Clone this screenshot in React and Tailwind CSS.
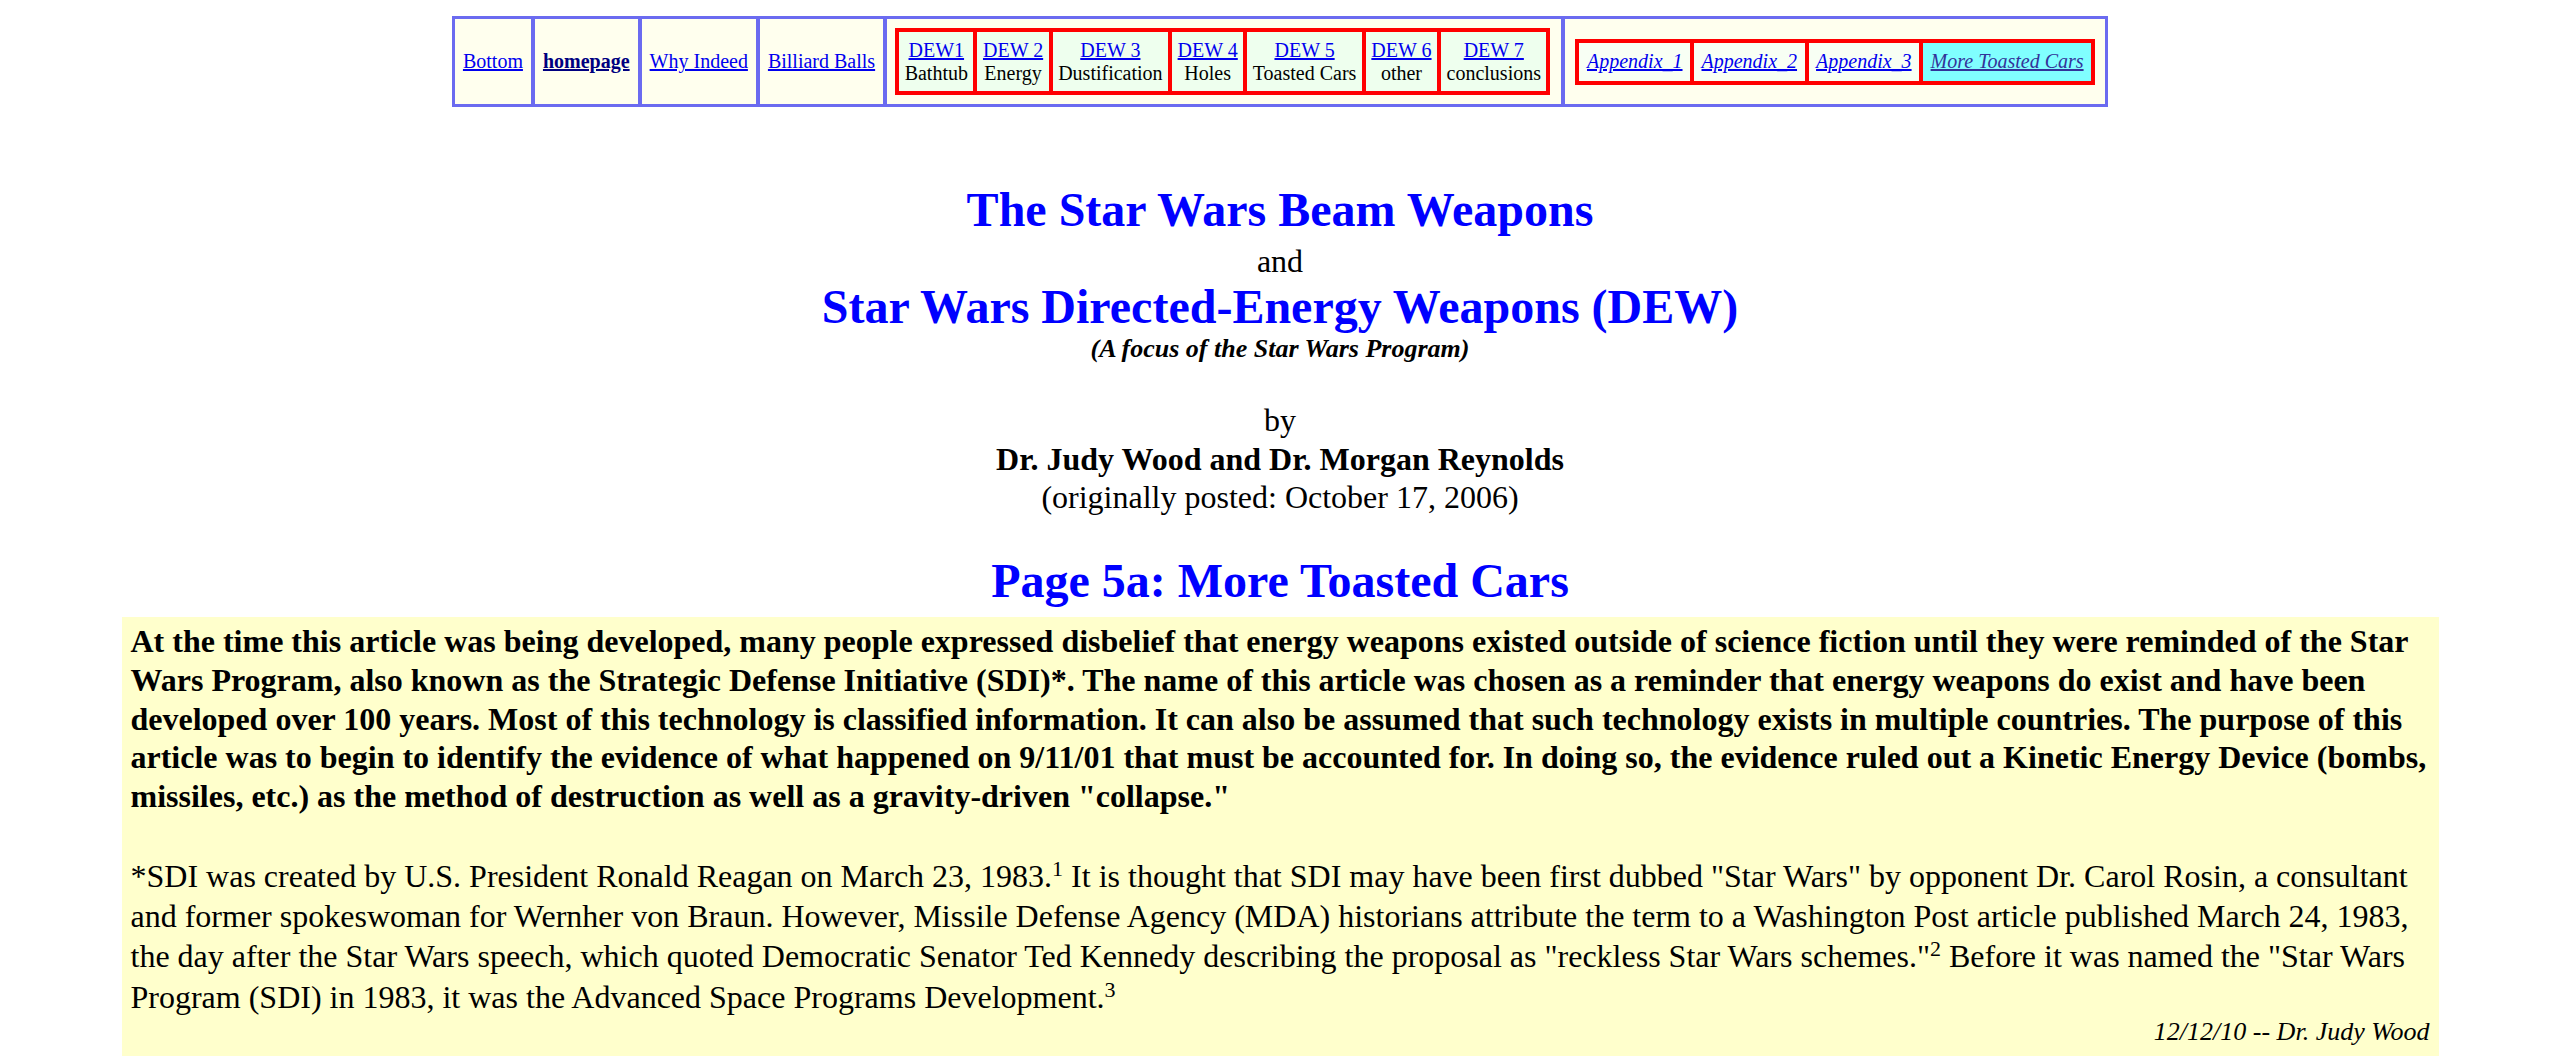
import React from "react";

function OuterCell({ children, first, className = "" }) {
  return (
    <div
      className={
        "flex items-center justify-center px-[8px] " +
        (first ? "" : "border-l-4 border-[#6b6bf0] ") +
        className
      }
    >
      {children}
    </div>
  );
}

function DewCell({ label, sub, first }) {
  return (
    <div
      className={
        "flex flex-col items-center justify-center bg-[#eeffee] px-[5.5px] py-[6.5px] text-center " +
        (first ? "" : "border-l-4 border-[#ff0000]")
      }
    >
      <a href="#" className="text-[#0000ee] underline">
        {label}
      </a>
      <span className="text-black">{sub}</span>
    </div>
  );
}

function AppCell({ label, first, active }) {
  return (
    <div
      className={
        "flex items-center justify-center px-[7.5px] py-[7.5px] italic " +
        (active ? "bg-[#80ffff] " : "bg-[#f8fff4] ") +
        (first ? "" : "border-l-4 border-[#ff0000]")
      }
    >
      <a
        href="#"
        className={active ? "text-[#333399] underline" : "text-[#0000ee] underline"}
      >
        {label}
      </a>
    </div>
  );
}

export default function App() {
  return (
    <div className="min-h-[1062px] bg-white font-['Liberation_Serif','Times_New_Roman',serif] text-black">
      {/* Navigation table */}
      <div className="flex justify-center pt-[16px]">
        <div className="flex border-[3px] border-[#6b6bf0] bg-[#ffffee] text-[20px] leading-[23px]">
          <OuterCell first>
            <a href="#" className="text-[#0000ee] underline">
              Bottom
            </a>
          </OuterCell>
          <OuterCell>
            <a href="#" className="font-bold text-[#000080] underline">
              homepage
            </a>
          </OuterCell>
          <OuterCell>
            <a href="#" className="text-[#0000ee] underline">
              Why Indeed
            </a>
          </OuterCell>
          <OuterCell>
            <a href="#" className="text-[#0000ee] underline">
              Billiard Balls
            </a>
          </OuterCell>
          <div className="flex items-center border-l-4 border-[#6b6bf0] py-[9px] pl-[8px] pr-[11px]">
            <div className="flex border-4 border-[#ff0000]">
              <DewCell first label="DEW1" sub="Bathtub" />
              <DewCell label="DEW 2" sub="Energy" />
              <DewCell label="DEW 3" sub="Dustification" />
              <DewCell label="DEW 4" sub="Holes" />
              <DewCell label="DEW 5" sub="Toasted Cars" />
              <DewCell label="DEW 6" sub="other" />
              <DewCell label="DEW 7" sub="conclusions" />
            </div>
          </div>
          <div className="flex items-center border-l-4 border-[#6b6bf0] px-[10px]">
            <div className="flex border-4 border-[#ff0000]">
              <AppCell first label="Appendix_1" />
              <AppCell label="Appendix_2" />
              <AppCell label="Appendix_3" />
              <AppCell active label="More Toasted Cars" />
            </div>
          </div>
        </div>
      </div>

      {/* Titles */}
      <div className="text-center">
        <h1 className="mt-[78px] text-[48px] font-bold leading-[50px] text-[#0000ff]">
          The Star Wars Beam Weapons
        </h1>
        <div className="mt-[7.5px] text-[32px] leading-[36px]">and</div>
        <h2 className="mt-[3.5px] text-[48px] font-bold leading-[50px] text-[#0000ff]">
          Star Wars Directed-Energy Weapons (DEW)
        </h2>
        <div className="mt-[1.5px] text-[26px] font-bold italic leading-[30px]">
          (A focus of the Star Wars Program)
        </div>
        <div className="mt-[38px] text-[32px] leading-[36px]">by</div>
        <div className="mt-[3px] text-[32px] font-bold leading-[36px]">
          Dr. Judy Wood and Dr. Morgan Reynolds
        </div>
        <div className="mt-[2.5px] text-[32px] leading-[36px]">
          (originally posted: October 17, 2006)
        </div>
        <h2 className="mt-[41px] text-[48px] font-bold leading-[50px] text-[#0000ff]">
          Page 5a: More Toasted Cars
        </h2>
      </div>

      {/* Yellow box */}
      <div className="mx-auto mt-[11px] w-[2317px] bg-[#ffffcc] px-[9px] pb-[9.5px] pt-[5px] text-[32px]">
        <p className="font-bold leading-[38.75px]">
          At the time this article was being developed, many people expressed disbelief that
          energy weapons existed outside of science fiction until they were reminded of the Star
          Wars Program, also known as the Strategic Defense Initiative (SDI)*. The name of this
          article was chosen as a reminder that energy weapons do exist and have been developed
          over 100 years. Most of this technology is classified information. It can also be
          assumed that such technology exists in multiple countries. The purpose of this article
          was to begin to identify the evidence of what happened on 9/11/01 that must be accounted
          for. In doing so, the evidence ruled out a Kinetic Energy Device (bombs, missiles, etc.)
          as the method of destruction as well as a gravity-driven "collapse."
        </p>
        <p className="mt-[40px] leading-[40.3px]">
          *SDI was created by U.S. President Ronald Reagan on March 23, 1983.
          <sup className="text-[22px]">1</sup> It is thought that SDI may have been first dubbed
          "Star Wars" by opponent Dr. Carol Rosin, a consultant and former spokeswoman for Wernher
          von Braun. However, Missile Defense Agency (MDA) historians attribute the term to a
          Washington Post article published March 24, 1983, the day after the Star Wars speech,
          which quoted Democratic Senator Ted Kennedy describing the proposal as "reckless Star
          Wars schemes."<sup className="text-[22px]">2</sup> Before it was named the "Star Wars
          Program (SDI) in 1983, it was the Advanced Space Programs Development.
          <sup className="text-[22px]">3</sup>
        </p>
        <div className="mt-0 text-right text-[26px] italic leading-[30px]">
          12/12/10 -- Dr. Judy Wood
        </div>
      </div>
    </div>
  );
}
